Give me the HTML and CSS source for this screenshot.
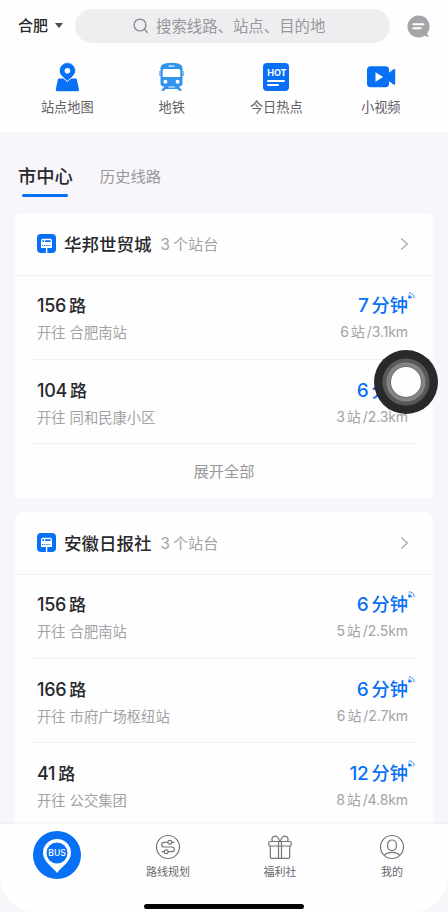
FILE: index.html
```html
<!DOCTYPE html>
<html lang="zh-CN">
<head>
<meta charset="utf-8">
<title>公交</title>
<link rel="stylesheet" href="styles.css">
</head>
<body>
<svg class="defs" width="0" height="0">
  <symbol id="stop" viewBox="0 0 19 19">
    <rect width="19" height="19" rx="4" fill="#0870f5"/>
    <path d="M5 4.800h9l1 1.500v7.700H4V6.300z" fill="#fff"/>
    <path d="M5.300 6.200h1.700v1.800H5.300zM8 6.200h5.700v1.800H8z" fill="#0870f5"/>
    <path d="M5 11.500h9" stroke="#0870f5" stroke-width="1.200" stroke-dasharray="1.200 1"/>
    <path d="M9.600 14v5" stroke="#fff" stroke-width="1.400"/>
  </symbol>
  <symbol id="signal" viewBox="0 0 7 7">
    <g fill="none" stroke="#2b8af5" stroke-width=".9"><path d="M.3 3a3.300 3.300 0 0 1 3.400 3.500M.8.8a5.200 5.200 0 0 1 5.400 5.400"/></g>
    <circle cx="1.500" cy="5.300" r="1.300" fill="#0870f5"/>
  </symbol>
  <symbol id="chevron" viewBox="0 0 9 14"><path d="M1.300 1.500 7.300 7l-6 5.500" fill="none" stroke="#a9a9ad" stroke-width="1.300"/></symbol>
</svg>
<div class="app">
  <header class="top">
    <div class="searchbar">
      <div class="city">合肥<i class="caret"></i></div>
      <div class="search">
        <svg width="16" height="16" viewBox="0 0 16 16" fill="none" stroke="#8b8b90" stroke-width="1.400"><circle cx="7" cy="7" r="5.900"/><path d="m11.300 11.300 3.400 3.500"/></svg>
        <span>搜索线路、站点、目的地</span>
      </div>
      <svg class="chat" width="23" height="23" viewBox="0 0 23 23"><path d="M11.500.5a11 11 0 1 0 6 20.200l4.200 1.300-.2-1.300-1.600-2A11 11 0 0 0 11.500.5z" fill="#a5a4a8"/><path d="M6.300 9.200h10.200M6.300 13.300h7.500" stroke="#fff" stroke-width="1.900" stroke-linecap="round"/></svg>
    </div>
    <nav class="shortcuts">
      <a><svg width="25" height="30" viewBox="0 0 25 30"><path d="M4.500 16.500h4l3.800 3.600 3.900-3.600h4c1 0 1.500.5 1.700 1.300l2.100 9.700c.2 1-.4 1.700-1.400 1.700H2.200c-1 0-1.600-.7-1.400-1.700l2-9.700c.2-.8.700-1.300 1.700-1.300z" fill="#0870f5"/><path d="M12.400.6a8.100 8.100 0 0 0-8.100 8.100c0 4.500 4.800 7.400 8.100 10.800 3.300-3.400 8.100-6.300 8.100-10.800A8.100 8.100 0 0 0 12.400.6z" fill="#0870f5" stroke="#fff" stroke-width=".8"/><circle cx="12.400" cy="8.700" r="2.800" fill="#fff"/></svg><span>站点地图</span></a>
      <a><svg width="25" height="30" viewBox="0 0 25 30"><path d="M6 23.500h4l-.8 2h6.800l-.8-2h4l4 5.300h-3.500l-1.300-1.800H6.700l-1.300 1.800H2z" fill="#3394ee"/><path d="M6 1.500q6.500-1.700 13 0 4.500 1 4.500 4.500V21q0 3.500-3.500 3.500H5Q1.500 24.500 1.500 21V6Q1.500 2.500 6 1.500z" fill="#3394ee"/><path d="M9.500 3.300h6v1.700h-6z" fill="#b5dafb"/><path d="M5.300 7h14.400q1.600 0 1.600 1.600V15H3.700V8.600Q3.700 7 5.300 7z" fill="#fff"/><circle cx="6.400" cy="19.700" r="2" fill="#fff"/><circle cx="18.600" cy="19.700" r="2" fill="#fff"/><path d="M.9 9v5M24.100 9v5" stroke="#3394ee" stroke-width="1"/></svg><span>地铁</span></a>
      <a><span class="hot"><b>HOT</b><i></i><i></i></span><span>今日热点</span></a>
      <a><svg width="30" height="30" viewBox="0 0 30 30"><rect x="1" y="4.200" width="22" height="21" rx="3.500" fill="#0870f5"/><path d="M22 11.500 27.800 7q1.400-.5 1.400 1v13.700q0 1.500-1.400 1L22 18.500z" fill="#0870f5"/><path d="M9.500 10.300v9.400l7.600-4.700z" fill="#fff"/></svg><span>小视频</span></a>
    </nav>
  </header>
  <div class="tabs"><span class="tab active">市中心</span><span class="tab">历史线路</span></div>
  <main class="list">
    <section class="card">
      <div class="station"><svg width="19" height="19"><use href="#stop"/></svg><h2>华邦世贸城</h2><small><span>3</span>个站台</small><svg class="chev" width="9" height="14"><use href="#chevron"/></svg></div>
      <div class="route"><div><h3><span>156</span>路</h3><p>开往 合肥南站</p></div><div class="eta"><strong><span>7</span>分钟<svg class="sig" width="7" height="7"><use href="#signal"/></svg></strong><p><span>6</span>站<em>/3.1km</em></p></div></div>
      <div class="route"><div><h3><span>104</span>路</h3><p>开往 同和民康小区</p></div><div class="eta"><strong><span>6</span>分钟</strong><p><span>3</span>站<em>/2.3km</em></p></div></div>
      <div class="more">展开全部</div>
    </section>
    <section class="card">
      <div class="station"><svg width="19" height="19"><use href="#stop"/></svg><h2>安徽日报社</h2><small><span>3</span>个站台</small><svg class="chev" width="9" height="14"><use href="#chevron"/></svg></div>
      <div class="route"><div><h3><span>156</span>路</h3><p>开往 合肥南站</p></div><div class="eta"><strong><span>6</span>分钟<svg class="sig" width="7" height="7"><use href="#signal"/></svg></strong><p><span>5</span>站<em>/2.5km</em></p></div></div>
      <div class="route"><div><h3><span>166</span>路</h3><p>开往 市府广场枢纽站</p></div><div class="eta"><strong><span>6</span>分钟<svg class="sig" width="7" height="7"><use href="#signal"/></svg></strong><p><span>6</span>站<em>/2.7km</em></p></div></div>
      <div class="route"><div><h3><span>41</span>路</h3><p>开往 公交集团</p></div><div class="eta"><strong><span>12</span>分钟<svg class="sig" width="7" height="7"><use href="#signal"/></svg></strong><p><span>8</span>站<em>/4.8km</em></p></div></div>
    </section>
  </main>
  <footer class="bottom">
    <nav class="tabbar">
      <a class="bus"><svg width="48" height="48" viewBox="0 0 48 48"><circle cx="24" cy="24" r="24" fill="#0870f5"/><path d="M24 8A14 14 0 0 0 10 22c0 8.500 9 13.500 14 20 5-6.500 14-11.500 14-20A14 14 0 0 0 24 8z" fill="#fff"/><circle cx="24" cy="22" r="10.500" fill="#0870f5"/><text x="24" y="25.300" text-anchor="middle" class="bus-text">BUS</text></svg></a>
      <a><svg width="26" height="26" viewBox="0 0 26 26" fill="none" stroke="#77777b" stroke-width="1.200"><circle cx="13" cy="13" r="11.500"/><path d="M12.800 8.300H9a2.300 2.300 0 0 0 0 4.700h8a2.300 2.300 0 0 1 0 4.700h-4M16.800 8.300h2.700M9.200 17.700H6.500"/><circle cx="14.800" cy="8.300" r="1.900"/><circle cx="11.200" cy="17.700" r="1.900"/></svg><span>路线规划</span></a>
      <a><svg width="26" height="26" viewBox="0 0 26 26" fill="none" stroke="#77777b" stroke-width="1.200"><rect x="1.800" y="7.500" width="22.400" height="4.500" rx="1"/><path d="M3.300 12v11q0 1.300 1.300 1.300h16.800q1.300 0 1.300-1.300V12M11.500 7.500v16.800M14.500 7.500v16.800M5.300 7.300C3.700 3 8 .8 10.600 3.300L13 7.300l2.400-4C18 .8 22.300 3 20.700 7.300"/></svg><span>福利社</span></a>
      <a><svg width="26" height="26" viewBox="0 0 26 26" fill="none" stroke="#77777b" stroke-width="1.200"><circle cx="13" cy="13" r="11.500"/><rect x="8.700" y="6" width="8.600" height="10.500" rx="4.300"/><path d="M5.300 21.500c3.500-4.100 11.900-4.100 15.400 0"/></svg><span>我的</span></a>
    </nav>
    <div class="home"></div>
  </footer>
  <div class="touch"><i></i></div>
</div>
</body>
</html>
```
FILE: styles.css
```css
* { box-sizing: border-box; }
body, h2, h3, p { margin: 0; }
i, em { font-style: normal; }
body {
  font-family: Inter, "Noto Sans CJK SC", sans-serif;
  color: #29292d;
  background: #f8f6fa;
}
svg { display: block; flex: none; }
.defs { position: absolute; }
.app {
  position: relative;
  display: flex;
  flex-direction: column;
  width: 448px;
  height: 912px;
  overflow: hidden;
}
.top { flex: none; height: 132px; background: #fefefe; }
.searchbar { display: flex; align-items: center; padding: 9px 18px 0; height: 43px; }
.city {
  display: flex;
  align-items: center;
  gap: 7px;
  width: 57px;
  font-size: 15px;
  font-weight: 500;
  line-height: 20px;
  padding-bottom: 1px;
}
.caret { border: 4px solid transparent; border-top: 5px solid #4b4b4f; border-bottom: 0; }
.search {
  display: flex;
  align-items: center;
  gap: 7px;
  width: 315px;
  height: 34px;
  padding: 0 0 2px 58px;
  border-radius: 17px;
  background: #eeedf0;
  color: #98979c;
  font-size: 15.4px;
}
.search svg { margin-top: 2px; }
.chat { margin-left: 17px; }
.shortcuts { display: flex; padding: 19px 15px 0; }
.shortcuts a {
  display: flex;
  flex-direction: column;
  align-items: center;
  gap: 5px;
  width: 104.500px;
  font-size: 13.200px;
  line-height: 20px;
  color: #626166;
}
.hot {
  display: flex;
  flex-direction: column;
  width: 26px;
  height: 28px;
  margin: 1px 0;
  padding: 4px 4px 0;
  border-radius: 4px;
  background: #0870f5;
}
.hot b { font-size: 9px; line-height: 11px; color: #fff; text-align: center; }
.hot i { width: 18px; height: 2px; margin-top: 1.500px; border-radius: 1px; background: #fff; }
.hot i + i { width: 12px; margin-top: 2px; }
.tabs { flex: none; display: flex; align-items: flex-start; gap: 27px; height: 81px; padding: 31px 18px 0; }
.tab { font-size: 15.300px; line-height: 28px; color: #98979c; }
.tab.active {
  display: flex;
  flex-direction: column;
  align-items: center;
  font-size: 18.300px;
  font-weight: 500;
  line-height: 27px;
  color: #29292d;
}
.tab.active::after { content: ""; width: 46px; height: 3px; margin-top: 4px; border-radius: 2px; background: #0870f5; }
.list {
  flex: 1;
  min-height: 0;
  display: flex;
  flex-direction: column;
  gap: 13.500px;
  padding: 0 15px;
  overflow: hidden;
}
.card { flex: none; border-radius: 7px; background: #fefefe; }
.station { display: flex; align-items: center; height: 62.700px; padding: 0 24px 0 22px; border-bottom: 1px solid #f3f3f5; }
.station h2 { margin-left: 8px; font-size: 17.500px; font-weight: 500; }
.station small { display: flex; align-items: baseline; gap: 3px; margin: -1px 0 0 9px; font-size: 15.200px; color: #a3a2a7; }
.chev { margin-left: auto; }
.route {
  display: flex;
  justify-content: space-between;
  height: 84.400px;
  margin: 0 17px;
  padding: 17.800px 8px 0 5px;
  border-bottom: 1px solid #f3f3f5;
}
.route h3, .route strong {
  position: relative;
  display: flex;
  align-items: baseline;
  gap: 3px;
  font-size: 17px;
  font-weight: 500;
  line-height: 26px;
}
.route h3 span { font-size: 18px; letter-spacing: -.3px; }
.route strong { height: 26px; color: #0870f5; font-size: 18.200px; line-height: 25px; }
.route strong span { font-size: 19px; letter-spacing: -.2px; }
.route p { margin-top: 2px; font-size: 14.300px; line-height: 24px; color: #a3a2a7; }
.eta { display: flex; flex-direction: column; align-items: flex-end; }
.route .eta p { display: flex; align-items: baseline; gap: 2px; margin-top: 1px; font-size: 14px; letter-spacing: -.1px; }
.sig { position: absolute; left: 100%; top: -1px; }
.more { height: 54px; line-height: 55px; text-align: center; font-size: 15.300px; color: #98979c; }
.bottom {
  flex: none;
  position: relative;
  height: 88px;
  background: #fefefe;
  border-radius: 0 0 34px 34px;
  box-shadow: 0 -1px 3px rgba(40, 30, 60, .06);
}
.tabbar { display: grid; grid-template-columns: repeat(4, 112px); height: 80px; padding-top: 10px; }
.tabbar a {
  display: flex;
  flex-direction: column;
  align-items: center;
  gap: 4px;
  font-size: 11px;
  line-height: 16px;
  color: #69686d;
}
.tabbar .bus { margin-top: -3px; padding-left: 1px; }
.bus-text { font-size: 8.500px; font-weight: 500; fill: #fff; }
.home { width: 160px; height: 5px; margin: 0 auto; border-radius: 3px; background: #050505; }
.touch {
  position: absolute;
  left: 374px;
  top: 350px;
  display: grid;
  place-items: center;
  width: 64px;
  height: 64px;
  border-radius: 50%;
  background: radial-gradient(circle, #858487 19px, #58585b 20px, #58585b 23px, #29292b 24px);
}
.touch i { width: 30px; height: 30px; border-radius: 50%; background: #fefefe; box-shadow: 0 0 0 1px #707073; }
```
